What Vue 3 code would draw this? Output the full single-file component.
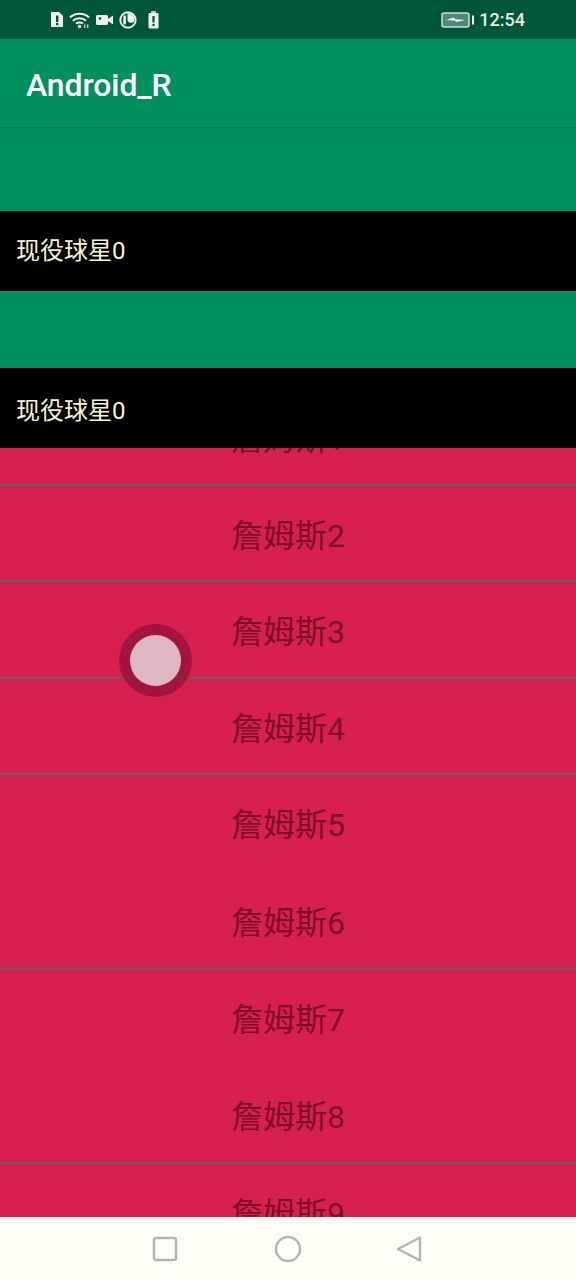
<script setup>
const heights = [97, 96, 97, 96, 97, 98, 96, 98, 97]
const rows = heights.map((h, i) => ({
  n: i + 1,
  h,
  line: i !== 4 && i !== 6,
}))
</script>

<template>
  <div class="screen">
    <header class="status">
      <div class="status-left">
        <svg class="ico" width="14" height="17" viewBox="0 0 14 17">
          <path fill="#eef2ee" d="M1 1h8l4 4v11H1z" />
          <rect x="6" y="4.500" width="2.400" height="6.500" fill="#00503c" />
          <rect x="6" y="12" width="2.400" height="2.200" fill="#00503c" />
        </svg>
        <svg class="ico" width="22" height="18" viewBox="0 0 22 18">
          <g fill="none" stroke="#eef2ee" stroke-width="2">
            <path d="M1 6.500C6 1.500 15 1.500 20 6.500" />
            <path d="M4 9.800C7.500 6.500 13.500 6.500 17 9.800" />
            <path d="M7 12.600C8.800 11 12.200 11 14 12.600" />
          </g>
          <circle cx="10.500" cy="15.500" r="1.800" fill="#eef2ee" />
          <rect x="15" y="13.500" width="1.400" height="3.500" fill="#c8d8d0" />
          <rect x="18" y="13.500" width="1.400" height="3.500" fill="#c8d8d0" />
        </svg>
        <svg class="ico" width="18" height="12" viewBox="0 0 18 12">
          <rect x="0" y="1" width="12" height="10" rx="1.500" fill="#eef2ee" />
          <path fill="#eef2ee" d="M12 5l5-3.500V10.500L12 7z" />
          <circle cx="4" cy="4.500" r="1.300" fill="#00503c" />
        </svg>
        <svg class="ico" width="18" height="18" viewBox="0 0 18 18">
          <circle cx="9" cy="9" r="7.700" fill="none" stroke="#eef2ee" stroke-width="1.900" />
          <rect x="4.300" y="4.500" width="2.600" height="9" rx="1" fill="#eef2ee" />
          <path fill="#eef2ee" d="M8.500 2.500h1.500a6.500 6.500 0 0 1 5.500 5.500 3.500 3.500 0 0 1-7 .5z" />
        </svg>
        <svg class="ico batt" width="11" height="18" viewBox="0 0 11 18">
          <rect x="3" y="0" width="5" height="2" fill="#b8ccc4" />
          <rect x="0.500" y="2" width="10" height="15.500" rx="1" fill="#eef2ee" />
          <rect x="4.400" y="5" width="2.200" height="6.500" fill="#00503c" />
          <rect x="4.400" y="12.800" width="2.200" height="2.200" fill="#00503c" />
        </svg>
      </div>
      <div class="status-right">
        <svg class="ico" width="33" height="18" viewBox="0 0 33 18">
          <rect x="1" y="2" width="27" height="14" rx="2" fill="#4d8a7c" stroke="#cfdcd6" stroke-width="1.500" />
          <path fill="#fff" d="M5 9l8-2.500 1 1.800L24 9l-9 2-1-1.500z" />
          <rect x="31" y="4.500" width="2" height="9" fill="#eef2ee" />
        </svg>
        <span class="time">12:54</span>
      </div>
    </header>

    <div class="appbar"><span class="title">Android_R</span></div>
    <div class="band band-a"></div>
    <div class="sticky">现役球星0</div>
    <div class="band band-b"></div>
    <div class="sticky second">现役球星0</div>

    <main class="list">
      <div class="list-inner">
        <div
          v-for="r in rows"
          :key="r.n"
          class="row"
          :class="{ line: r.line }"
          :style="{ height: r.h + 'px' }"
        >詹姆斯{{ r.n }}</div>
      </div>
    </main>

    <nav class="nav">
      <svg width="28" height="28" viewBox="0 0 28 28">
        <rect x="3" y="3" width="22" height="22" rx="2" fill="none" stroke="#b2b2b2" stroke-width="2.400" />
      </svg>
      <svg width="28" height="28" viewBox="0 0 28 28">
        <circle cx="14" cy="14" r="12" fill="none" stroke="#b2b2b2" stroke-width="2.400" />
      </svg>
      <svg width="28" height="28" viewBox="0 0 28 28">
        <path d="M24 2.500V25.500L2 14z" fill="none" stroke="#b2b2b2" stroke-width="2.400" stroke-linejoin="round" />
      </svg>
    </nav>

    <div class="touch"><div class="touch-core"></div></div>
  </div>
</template>

<style>
html,
body {
  margin: 0;
  padding: 0;
}
</style>

<style scoped>
.screen {
  position: relative;
  width: 576px;
  height: 1280px;
  overflow: hidden;
  display: flex;
  flex-direction: column;
  background: repeating-conic-gradient(#009455 0 25%, #008a68 0 50%) 0 0 / 2px 2px;
  font-family: Roboto, "Noto Sans CJK SC", sans-serif;
}
.status {
  height: 39px;
  flex: none;
  background: repeating-conic-gradient(#005c34 0 25%, #005040 0 50%) 0 0 / 2px 2px;
  display: flex;
  align-items: center;
  justify-content: space-between;
  padding: 0 51px 0 50px;
  box-sizing: border-box;
}
.status-left {
  display: flex;
  align-items: center;
  gap: 5px;
}
.status-right {
  display: flex;
  align-items: center;
  gap: 5px;
}
.ico {
  display: block;
}
.batt {
  margin-left: 6px;
}
.time {
  color: #e8efe9;
  font-size: 18px;
  font-weight: 500;
  line-height: 20px;
}
.appbar {
  height: 89px;
  flex: none;
  box-sizing: border-box;
  border-bottom: 1px solid #007a5c;
  padding: 3px 0 0 26px;
  display: flex;
  align-items: center;
}
.title {
  color: #fff;
  font-size: 32px;
  font-weight: 500;
  letter-spacing: -0.1px;
}
.band-a {
  height: 83px;
  flex: none;
}
.band-b {
  height: 77px;
  flex: none;
}
.sticky {
  height: 80px;
  flex: none;
  background: #000;
  color: #f7f5d2;
  font-size: 24px;
  line-height: 80px;
  padding-left: 16px;
}
.second {
  line-height: 86px;
}
.list {
  flex: 1;
  min-height: 0;
  overflow: hidden;
  background: repeating-conic-gradient(#d41c48 0 25%, #da2458 0 50%) 0 0 / 2px 2px;
}
.list-inner {
  margin-top: -60px;
}
.row {
  box-sizing: border-box;
  display: flex;
  align-items: center;
  justify-content: center;
  padding-bottom: 1px;
  font-size: 32px;
  font-weight: 400;
  color: #7e0d22;
  position: relative;
}
.row.line::after {
  content: "";
  position: absolute;
  left: 0;
  right: 0;
  bottom: -1px;
  height: 2px;
  background: #6a5f5c;
}
.nav {
  height: 63px;
  flex: none;
  background: #fffef6;
  display: flex;
  align-items: center;
  justify-content: space-between;
  padding: 0 152px 0 151px;
  box-sizing: border-box;
}
.touch {
  position: absolute;
  left: 119px;
  top: 624px;
  width: 73px;
  height: 73px;
  border-radius: 50%;
  background: rgba(120, 10, 50, 0.55);
  display: flex;
  align-items: center;
  justify-content: center;
}
.touch-core {
  width: 51px;
  height: 51px;
  border-radius: 50%;
  background: #dfb7c3;
}
</style>
